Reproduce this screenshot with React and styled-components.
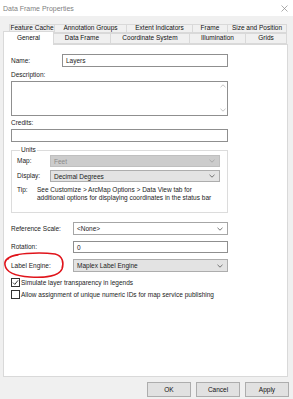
import React from "react";
import styled, { createGlobalStyle } from "styled-components";

const Global = createGlobalStyle`
  html, body {
    margin: 0;
    padding: 0;
    background: #f0f0f0;
  }
`;

const Window = styled.div`
  width: 293px;
  height: 399px;
  overflow: hidden;
  background: #f0f0f0;
  display: flex;
  flex-direction: column;
  font-family: "Liberation Sans", Arial, sans-serif;
  font-size: 6.5px;
  color: #1b1b1b;
`;

const TitleBar = styled.div`
  height: 16px;
  flex: none;
  background: #ffffff;
  display: flex;
  align-items: center;
  justify-content: space-between;
  padding: 0 5px 0 3px;
  font-size: 7px;
  color: #7f7f7f;
`;

const CloseGlyph = styled.svg`
  width: 7px;
  height: 7px;
`;

const TabArea = styled.div`
  padding: 8px 5px 0 3px;
  flex: none;
`;

const TabRow = styled.div`
  display: flex;
  align-items: flex-end;
  height: ${(p) => p.$h}px;
  padding-left: ${(p) => p.$indent || 0}px;
`;

const Tab = styled.div`
  box-sizing: border-box;
  width: ${(p) => p.$w}px;
  height: ${(p) => (p.$active ? 14 : p.$h)}px;
  margin-right: -1px;
  margin-bottom: ${(p) => (p.$active ? -1 : 0)}px;
  border: 1px solid #d9d9d9;
  border-bottom: ${(p) => (p.$active ? "none" : "1px solid #d9d9d9")};
  background: ${(p) => (p.$active ? "#ffffff" : "#f0f0f0")};
  position: relative;
  z-index: ${(p) => (p.$active ? 1 : 0)};
  display: flex;
  align-items: center;
  justify-content: center;
  white-space: nowrap;
  line-height: 1;
  color: #111;
`;

const Panel = styled.div`
  box-sizing: border-box;
  height: 333px;
  margin: 0 5px 0 3px;
  border: 1px solid #d9d9d9;
  background: #ffffff;
  padding: 9px 0 0 7px;
  flex: none;
`;

const Content = styled.div`
  width: 217px;
  display: flex;
  flex-direction: column;
`;

const Row = styled.div`
  display: grid;
  grid-template-columns: ${(p) => p.$label}px ${(p) => p.$field}px;
  align-items: center;
  margin-top: ${(p) => p.$mt || 0}px;
  position: relative;
`;

const Label = styled.span`
  line-height: 8px;
  white-space: nowrap;
`;

const Caption = styled.div`
  line-height: 8px;
  margin-top: ${(p) => p.$mt}px;
`;

const TextBox = styled.div`
  box-sizing: border-box;
  height: ${(p) => p.$h}px;
  border: 1px solid #8f8f8f;
  background: #ffffff;
  display: flex;
  align-items: center;
  padding-left: 3px;
  margin-top: ${(p) => p.$mt || 0}px;
`;

const comboColors = {
  edit: { bg: "#ffffff", border: "#a6a6a6", text: "#1b1b1b" },
  drop: { bg: "#e3e3e3", border: "#adadad", text: "#1b1b1b" },
  disabled: { bg: "#cccccc", border: "#bfbfbf", text: "#8a8a8a" },
};

const Combo = styled.div`
  box-sizing: border-box;
  height: ${(p) => p.$h}px;
  border: 1px solid ${(p) => comboColors[p.$kind].border};
  background: ${(p) => comboColors[p.$kind].bg};
  color: ${(p) => comboColors[p.$kind].text};
  display: flex;
  align-items: center;
  justify-content: space-between;
  padding: 0 4px 0 3px;
`;

const Chevron = styled.svg`
  width: 6px;
  height: 4px;
  flex: none;
`;

const Memo = styled.div`
  box-sizing: border-box;
  height: 35px;
  margin-top: 2px;
  border: 1px solid #8f8f8f;
  background: #ffffff;
  display: flex;
  justify-content: flex-end;
`;

const ScrollTrack = styled.div`
  width: 9px;
  display: flex;
  flex-direction: column;
  justify-content: space-between;
  align-items: center;
  padding: 2px 0 3px;
`;

const Group = styled.fieldset`
  margin: 5px 0 0;
  padding: 0 8px 9px 5px;
  border: 1px solid #dcdcdc;
  min-width: 0;
  height: 66px;
  box-sizing: border-box;
`;

const Legend = styled.legend`
  padding: 0 1px;
  margin-left: 3px;
  line-height: 6px;
`;

const TipText = styled.div`
  line-height: 8px;
  white-space: nowrap;
`;

const CheckRow = styled.label`
  display: flex;
  align-items: center;
  gap: 1px;
  height: 9px;
  margin-top: ${(p) => p.$mt}px;
  white-space: nowrap;
`;

const Box = styled.span`
  box-sizing: border-box;
  width: 9px;
  height: 9px;
  border: 1px solid #333333;
  background: #ffffff;
  display: flex;
  align-items: center;
  justify-content: center;
  flex: none;
`;

const Ring = styled.svg`
  position: absolute;
  left: -9px;
  top: -7px;
  width: 66px;
  height: 28px;
  pointer-events: none;
  overflow: visible;
`;

const Footer = styled.div`
  display: flex;
  justify-content: flex-end;
  gap: 5px;
  margin-top: 5px;
  padding-right: 4px;
`;

const Button = styled.div`
  box-sizing: border-box;
  width: 44px;
  height: 15px;
  border: 1px solid #adadad;
  background: #e1e1e1;
  display: flex;
  align-items: center;
  justify-content: center;
  color: #111;
`;

const Down = ({ color = "#555" }) => (
  <Chevron viewBox="0 0 6 4">
    <polyline points="0.5,0.8 3,3.2 5.5,0.8" fill="none" stroke={color} strokeWidth="0.8" />
  </Chevron>
);

const Up = ({ color = "#555" }) => (
  <Chevron viewBox="0 0 6 4">
    <polyline points="0.5,3.2 3,0.8 5.5,3.2" fill="none" stroke={color} strokeWidth="0.8" />
  </Chevron>
);

const topTabs = [
  ["Feature Cache", 46],
  ["Annotation Groups", 73],
  ["Extent Indicators", 67],
  ["Frame", 36],
  ["Size and Position", 60],
];

const bottomTabs = [
  ["General", 51, true],
  ["Data Frame", 58],
  ["Coordinate System", 80],
  ["Illumination", 57],
  ["Grids", 42],
];

export default function App() {
  return (
    <>
      <Global />
      <Window>
        <TitleBar>
          <span>Data Frame Properties</span>
          <CloseGlyph viewBox="0 0 7 7">
            <path d="M0.5 0.5 L6.5 6.5 M6.5 0.5 L0.5 6.5" stroke="#8a8a8a" strokeWidth="0.7" />
          </CloseGlyph>
        </TitleBar>

        <TabArea>
          <TabRow $h={9} $indent={6}>
            {topTabs.map(([name, w]) => (
              <Tab key={name} $w={w} $h={9}>
                {name}
              </Tab>
            ))}
          </TabRow>
          <TabRow $h={11}>
            {bottomTabs.map(([name, w, active]) => (
              <Tab key={name} $w={w} $h={11} $active={active}>
                {name}
              </Tab>
            ))}
          </TabRow>
        </TabArea>

        <Panel>
          <Content>
            <Row $label={51} $field={166}>
              <Label>Name:</Label>
              <TextBox $h={13}>Layers</TextBox>
            </Row>

            <Caption $mt={4}>Description:</Caption>
            <Memo>
              <ScrollTrack>
                <Up color="#b5b5b5" />
                <Down color="#b5b5b5" />
              </ScrollTrack>
            </Memo>

            <Caption $mt={3}>Credits:</Caption>
            <TextBox $h={13} $mt={2} />

            <Group>
              <Legend>Units</Legend>
              <Row $label={33} $field={170} $mt={2}>
                <Label>Map:</Label>
                <Combo $h={12} $kind="disabled">
                  Feet
                  <Down color="#a0a0a0" />
                </Combo>
              </Row>
              <Row $label={33} $field={170} $mt={3}>
                <Label>Display:</Label>
                <Combo $h={12} $kind="drop">
                  Decimal Degrees
                  <Down />
                </Combo>
              </Row>
              <Row $label={20} $field={183} $mt={4}>
                <Label style={{ alignSelf: "start" }}>Tip:</Label>
                <div>
                  <TipText>See Customize &gt; ArcMap Options &gt; Data View tab for</TipText>
                  <TipText>additional options for displaying coordinates in the status bar</TipText>
                </div>
              </Row>
            </Group>

            <Row $label={62} $field={155} $mt={9}>
              <Label>Reference Scale:</Label>
              <Combo $h={13} $kind="edit">
                &lt;None&gt;
                <Down />
              </Combo>
            </Row>
            <Row $label={62} $field={155} $mt={6}>
              <Label>Rotation:</Label>
              <TextBox $h={12}>0</TextBox>
            </Row>
            <Row $label={62} $field={155} $mt={6}>
              <Label>Label Engine:</Label>
              <Combo $h={13} $kind="drop">
                Maplex Label Engine
                <Down />
              </Combo>
              <Ring viewBox="0 0 66 28">
                <path
                  d="M6 7 C8 1, 38 0, 53 2 C61 4, 62 11, 60 17 C57 24, 43 26, 28 25 C13 24, 4 20, 3 13 C2 8, 7 4, 16 3"
                  fill="none"
                  stroke="#e0141b"
                  strokeWidth="1.6"
                  strokeLinecap="round"
                />
              </Ring>
            </Row>

            <CheckRow $mt={6}>
              <Box>
                <svg width="7" height="7" viewBox="0 0 7 7">
                  <polyline points="1,3.6 2.8,5.4 6,1.4" fill="none" stroke="#222" strokeWidth="0.9" />
                </svg>
              </Box>
              Simulate layer transparency in legends
            </CheckRow>
            <CheckRow $mt={3}>
              <Box />
              Allow assignment of unique numeric IDs for map service publishing
            </CheckRow>
          </Content>
        </Panel>

        <Footer>
          <Button>OK</Button>
          <Button>Cancel</Button>
          <Button>Apply</Button>
        </Footer>
      </Window>
    </>
  );
}
